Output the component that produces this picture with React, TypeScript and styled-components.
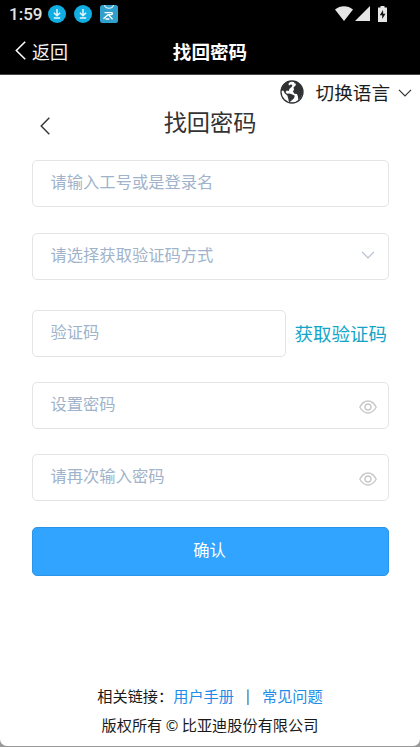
import React from "react";
import styled, { createGlobalStyle } from "styled-components";

const GlobalStyle = createGlobalStyle`
  * { box-sizing: border-box; }
  body {
    margin: 0;
    background: #999;
    font-family: "Noto Sans CJK SC", "Noto Sans", sans-serif;
  }
`;

const Screen = styled.div`
  width: 420px;
  height: 746px;
  display: flex;
  flex-direction: column;
  overflow: hidden;
  background: #fff;
  border-radius: 0 0 7px 7px;
`;

const StatusBar = styled.div`
  display: flex;
  align-items: center;
  height: 29px;
  flex: none;
  padding: 0 32px 0 9px;
  background: #000;
`;

const Clock = styled.span`
  width: 39px;
  font: 500 17px/29px Roboto, sans-serif;
  color: #e4e4e4;
`;

const StatusIcons = styled.div<{ $gap: number; $end?: boolean }>`
  display: flex;
  align-items: center;
  gap: ${(p) => p.$gap}px;
  margin-left: ${(p) => (p.$end ? "auto" : "0")};
  margin-top: ${(p) => (p.$end ? "-2px" : "-1px")};
  svg { display: block; }
`;

const NavBar = styled.header`
  display: grid;
  grid-template-columns: 100px 1fr 100px;
  align-items: center;
  height: 46px;
  flex: none;
  background: #000;
  border-bottom: 1px solid #444;
`;

const Back = styled.div`
  display: flex;
  align-items: center;
  gap: 6px;
  padding-left: 15px;
  font-size: 18px;
  line-height: 45px;
  color: #f4f4f4;
  svg { margin-bottom: 2px; }
`;

const NavTitle = styled.div`
  height: 45px;
  text-align: center;
  font-size: 18.6px;
  font-weight: 700;
  line-height: 43px;
  color: #fff;
`;

const Language = styled.div`
  display: flex;
  align-items: center;
  justify-content: flex-end;
  height: 33px;
  padding-right: 8px;
  font-size: 18.6px;
  line-height: 33px;
  color: #1c1c1c;
  span { height: 33px; margin: 0 8px 0 12px; }
  svg:last-child { margin-top: 2px; }
`;

const Heading = styled.div`
  display: grid;
  grid-template-columns: 80px 1fr 80px;
  align-items: center;
  height: 30px;
  svg { margin: 5px 0 0 40px; }
`;

const HeadingText = styled.h1`
  height: 30px;
  margin: 0;
  text-align: center;
  font-size: 23.2px;
  font-weight: 400;
  line-height: 27px;
  color: #333;
`;

const Form = styled.form`
  display: flex;
  flex-direction: column;
  padding: 22px 31px 0 32px;
`;

const Field = styled.div<{ $width?: number; $after?: number }>`
  display: flex;
  align-items: center;
  justify-content: space-between;
  width: ${(p) => (p.$width ? `${p.$width}px` : "100%")};
  height: 47px;
  margin-bottom: ${(p) => p.$after ?? 0}px;
  padding: 0 11px 0 17.5px;
  border: 1px solid #e3e4e6;
  border-radius: 5px;
  svg { flex: none; margin-top: 3px; }
`;

const Placeholder = styled.span`
  font-size: 16.3px;
  line-height: 41px;
  height: 45px;
  color: #a0b3ca;
  white-space: nowrap;
`;

const SelectArrow = styled.span`
  display: flex;
  margin: 0 2px 7px 0;
`;

const CodeRow = styled.div`
  display: flex;
  justify-content: space-between;
  margin-bottom: 25px;
`;

const CodeLink = styled.span`
  height: 47px;
  margin-right: 2px;
  font-size: 18.5px;
  line-height: 47px;
  color: #13a5c8;
  white-space: nowrap;
`;

const Submit = styled.button`
  height: 49px;
  padding: 0 2px 4px 0;
  border: 1px solid #2c94e6;
  border-radius: 5px;
  background: #30a4ff;
  color: #fff;
  font: 400 16.3px/43px "Noto Sans CJK SC", sans-serif;
`;

const Footer = styled.footer`
  margin-top: auto;
  padding-bottom: 7px;
  text-align: center;
  font-size: 15.2px;
  line-height: 29px;
  color: #1a1a1a;
`;

const Links = styled.div`
  display: flex;
  justify-content: center;
`;

const Link = styled.span`
  color: #1e8ce8;
`;

const Divider = styled.span`
  width: 28px;
  font-size: 14px;
  color: #333;
`;

const Copyright = styled.div`
  font-size: 15.2px;
`;

const Download = () => (
  <svg width="18" height="18" viewBox="0 0 18 18">
    <circle cx="9" cy="9" r="9" fill="#10aee2" />
    <path d="M9 4v6.500M5.900 7.800 9 10.800l3.100-3M5.800 13h6.400" fill="none" stroke="#e8f8fd" strokeWidth="1.5" />
  </svg>
);

const Chevron = ({ color, w = 14 }: { color: string; w?: number }) => (
  <svg width={w} height="8" viewBox="0 0 14 8">
    <path d="m1 .8 6 6 6-6" fill="none" stroke={color} strokeWidth="1.2" />
  </svg>
);

const Arrow = ({ color, w, h }: { color: string; w: number; h: number }) => (
  <svg width={w} height={h} viewBox="0 0 10 18" preserveAspectRatio="none">
    <path d="M9.3.7 1.2 9l8.1 8.3" fill="none" stroke={color} strokeWidth="1.4" />
  </svg>
);

const Globe = () => (
  <svg width="24" height="24" viewBox="0 0 24 24">
    <circle cx="12" cy="12" r="11" fill="#fff" stroke="#303133" strokeWidth="1.3" />
    <path
      fill="#303133"
      d="M10.500.8C5 1.500 1.400 5.500 1 10.500l2.500.3 1.200 2.500 2.600 2.200.8 2.500 1 4.600 2.500-2.100 2.400-2.300.8-2.400-3-1.500-2.500-.8-2.300.2-1.400-1.800 1.200-1.400 1.900.4.8-2.200 2.300-2 .6-1.600-1.600-.6-1.700 1-.7-1.500zM14.500 1.200l-.4 2 1.900.5-.5 1.700-2 2.100.5 2.200-1.100 1.700 1.600 2.400 2.500.2 1 2.700.2 3.500 3-3.100L23 12l-1.500-5.500-3.300-3.900z"
    />
  </svg>
);

const Eye = () => (
  <svg width="18" height="14" viewBox="0 0 18 14">
    <path d="M.8 7C3 3 5.800 1 9 1s6 2 8.200 6C15 11 12.200 13 9 13S3 11 .8 7z" fill="none" stroke="#c8c8c8" strokeWidth="1.4" />
    <circle cx="9" cy="7" r="3" fill="none" stroke="#c8c8c8" strokeWidth="1.4" />
  </svg>
);

export default function App() {
  return (
    <>
      <GlobalStyle />
      <Screen>
        <StatusBar>
          <Clock>1:59</Clock>
          <StatusIcons $gap={8}>
            <Download />
            <Download />
            <svg width="18" height="18" viewBox="0 0 18 18">
              <rect width="18" height="18" rx="2.500" fill="#309fcb" />
              <path d="M4.500 0c.8 4.300 8.200 4.300 9 0" fill="none" stroke="#e8f7ff" strokeWidth="1.1" />
              <path d="M4.500 7.700h7.300c1 0 .8 2-.6 2H8L3.500 13.700M8.500 9.900l4 4.300M5.500 14h3.800" fill="none" stroke="#fff" strokeWidth="1.300" />
            </svg>
          </StatusIcons>
          <StatusIcons $gap={2} $end>
            <svg width="18" height="15" viewBox="0 0 18 15">
              <path d="M0 3.500C5-1 13-1 18 3.500L9 15z" fill="#e6e6e6" />
            </svg>
            <svg width="15" height="15" viewBox="0 0 15 15">
              <path d="M15 0v15H0z" fill="#e6e6e6" />
            </svg>
            <svg width="16" height="16" viewBox="0 0 16 16">
              <path d="M8.500 0h4v1.500h2.500V16H6V1.500h2.500z" fill="#e6e6e6" />
              <path d="m11 4-3.200 5.300h2.400V13l3.300-5.200h-2.300z" fill="#111" />
            </svg>
          </StatusIcons>
        </StatusBar>
        <NavBar>
          <Back>
            <Arrow color="#fff" w={11} h={19} />
            返回
          </Back>
          <NavTitle>找回密码</NavTitle>
        </NavBar>
        <Language>
          <Globe />
          <span>切换语言</span>
          <Chevron color="#303133" />
        </Language>
        <Heading>
          <Arrow color="#333" w={10} h={18} />
          <HeadingText>找回密码</HeadingText>
        </Heading>
        <Form>
          <Field $after={26}>
            <Placeholder>请输入工号或是登录名</Placeholder>
          </Field>
          <Field $after={29.5}>
            <Placeholder>请选择获取验证码方式</Placeholder>
            <SelectArrow>
              <Chevron color="#b5bfce" />
            </SelectArrow>
          </Field>
          <CodeRow>
            <Field $width={254}>
              <Placeholder>验证码</Placeholder>
            </Field>
            <CodeLink>获取验证码</CodeLink>
          </CodeRow>
          <Field $after={25}>
            <Placeholder>设置密码</Placeholder>
            <Eye />
          </Field>
          <Field $after={26}>
            <Placeholder>请再次输入密码</Placeholder>
            <Eye />
          </Field>
          <Submit type="button">确认</Submit>
        </Form>
        <Footer>
          <Links>
            <span>相关链接：</span>
            <Link>用户手册</Link>
            <Divider>|</Divider>
            <Link>常见问题</Link>
          </Links>
          <Copyright>版权所有 © 比亚迪股份有限公司</Copyright>
        </Footer>
      </Screen>
    </>
  );
}
